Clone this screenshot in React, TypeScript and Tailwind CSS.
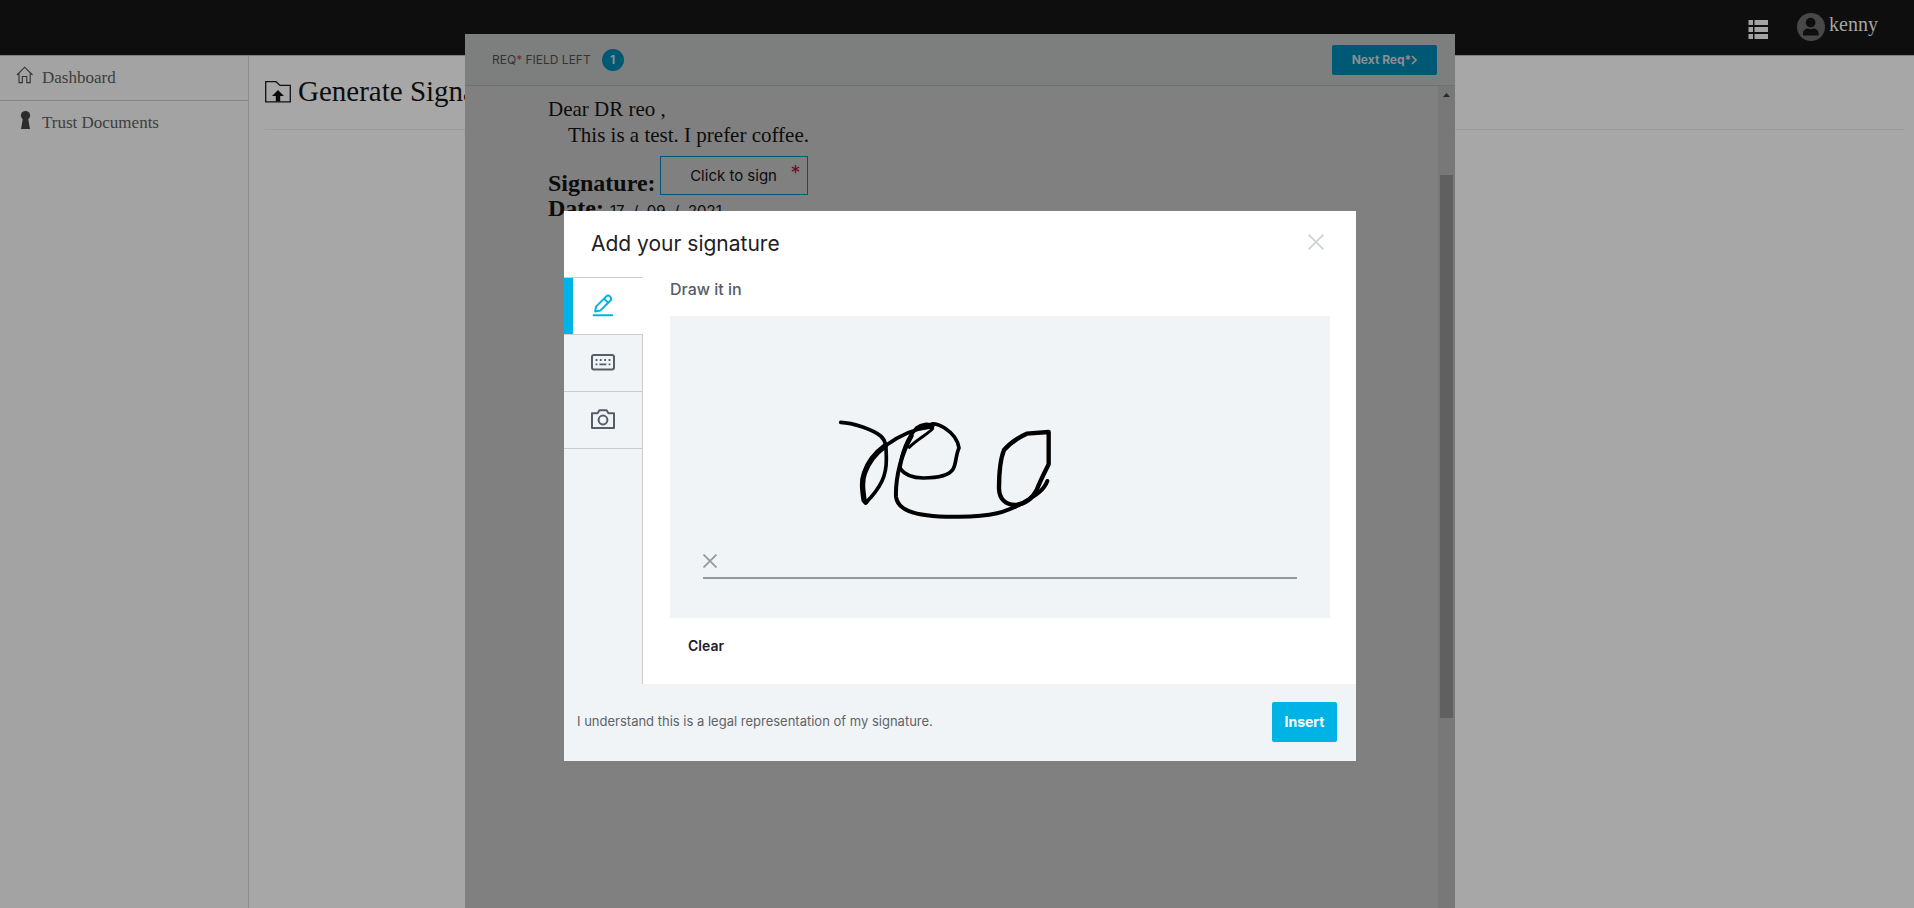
import React from "react";

const serif = "font-['Liberation_Serif',serif]";

function HomeIcon() {
  return (
    <svg width="18" height="18" viewBox="0 0 18 18" fill="none" stroke="#333" strokeWidth="1.1" aria-hidden="true">
      <path d="M1 9 L8.7 1.2 L16.5 9 M3 7.2 V16.6 H6.3 V10.5 H10.8 V16.6 H14.2 V7.2" />
    </svg>
  );
}

function KeyholeIcon() {
  return (
    <svg width="18" height="18" viewBox="0 0 18 18" fill="#2b2b2b" aria-hidden="true">
      <circle cx="9.5" cy="4.6" r="4.6" />
      <path d="M7 7 H12 L14 18 H5 Z" />
    </svg>
  );
}

function FolderUploadIcon() {
  return (
    <svg width="26" height="22" viewBox="0 0 26 22" aria-hidden="true">
      <path d="M.7 .7 H11 L15 4.4 H25.3 V20.8 H.7 Z" fill="none" stroke="#111" strokeWidth="1.3" />
      <path d="M13 9 L19 15 H15.2 V20.5 H10.8 V15 H7 Z" fill="#0a0a0a" />
    </svg>
  );
}

function ListIcon() {
  return (
    <svg width="20" height="20" viewBox="0 0 20 20" fill="#a3a3a3" aria-hidden="true">
      <path d="M.5 0H5V5H.5ZM6.5 0H20V5H6.5ZM.5 7H5V12H.5ZM6.5 7H20V12H6.5ZM.5 14H5V19H.5ZM6.5 14H20V19H6.5Z" />
    </svg>
  );
}

function AvatarIcon() {
  return (
    <svg width="28" height="28" viewBox="0 0 28 28" aria-hidden="true">
      <circle cx="14" cy="14" r="14" fill="#484848" />
      <circle cx="13.6" cy="9.6" r="4.9" fill="#0e0e0e" />
      <path d="M6 22.4 V20.5 C6 17 8.8 15.4 11 15.4 C12.8 16.4 14.6 16.4 16.4 15.4 C18.8 15.4 21.6 17 21.6 20.5 V22.4 Z" fill="#0e0e0e" />
    </svg>
  );
}

function PencilIcon() {
  return (
    <svg width="24" height="24" viewBox="0 0 24 24" fill="none" stroke="#00b3e6" strokeWidth="2" strokeLinejoin="round" strokeLinecap="round" aria-hidden="true">
      <path d="M3.2 17.4 L4 12.6 L14 2.6 A2.7 2.7 0 0 1 18.2 6.8 L8.2 16.6 Z M12.2 4.8 L16 8.6" />
      <path d="M1.6 21.2 H20.2" />
    </svg>
  );
}

function KeyboardIcon() {
  return (
    <svg width="24" height="24" viewBox="0 0 24 24" fill="none" stroke="#565d66" aria-hidden="true">
      <rect x="1" y="4" width="22" height="14.4" rx="2" strokeWidth="2" />
      <path d="M4.6 9H6.4M8.8 9H10.6M13.2 9H15M17.6 9H19.4M4.6 13.4H6.4M8.4 13.4H15.4M17.6 13.4H19.4" strokeWidth="1.9" />
    </svg>
  );
}

function CameraIcon() {
  return (
    <svg width="24" height="24" viewBox="0 0 24 24" fill="none" stroke="#565d66" strokeWidth="2" strokeLinejoin="round" aria-hidden="true">
      <path d="M1 5.2 H6.6 L8.4 2.2 H15.6 L17.4 5.2 H23 V20 H1 Z" />
      <circle cx="12" cy="12" r="4.4" />
    </svg>
  );
}

function Cross({ size, color, width }: { size: number; color: string; width: number }) {
  return (
    <svg width={size} height={size} viewBox="0 0 16 16" fill="none" stroke={color} strokeWidth={width} aria-hidden="true">
      <path d="M0.6 0.6 L15.4 15.4 M15.4 0.6 L0.6 15.4" />
    </svg>
  );
}

function Signature() {
  return (
    <svg width="250" height="140" viewBox="0 0 750 420" fill="none" stroke="#000" strokeLinecap="round" strokeLinejoin="round" role="img" aria-label="Drawn signature">
      <path strokeWidth="11" d="M62 67 C100 68 160 90 182 108 C198 122 199 138 199 180 C199 225 185 260 137 309" />
      <path strokeWidth="16" d="M137 306 L132 300 C128 270 124 245 133 220 C143 190 165 160 195 138" />
      <path strokeWidth="11" d="M195 138 C240 105 290 85 336 80" />
      <path strokeWidth="9" d="M338 86 C325 102 290 118 268 142" />
      <path strokeWidth="11" d="M338 78 C325 70 305 72 290 84 C262 112 243 165 240 205 C258 230 285 234 310 234 C350 234 385 230 399 208 C409 190 407 165 417 144 C413 118 395 98 375 85 C360 75 348 71 335 72" />
      <path strokeWidth="15" d="M308 80 C316 75 328 75 335 80" />
      <path strokeWidth="12" d="M275 108 C245 160 226 230 228 290 C232 325 270 350 400 350 C520 352 560 335 610 308 C650 285 672 270 682 243" />
      <path strokeWidth="13" d="M686 96 L620 101 C590 115 565 135 552 150 C542 175 537 210 537 265 C538 300 560 314 585 315 C620 312 640 290 650 270 C662 240 675 215 686 193 Z" />
    </svg>
  );
}

const tabs = [
  { label: "Draw", icon: <PencilIcon />, active: true },
  { label: "Type", icon: <KeyboardIcon />, active: false },
  { label: "Upload", icon: <CameraIcon />, active: false },
];

function SignatureDialog() {
  return (
    <section role="dialog" aria-modal="true" aria-labelledby="sig-title" className="w-[792px] bg-white text-[#1e2022]">
      <header className="flex h-[66px] items-center justify-between pr-8 pl-[27px]">
        <h2 id="sig-title" className="text-[21px] leading-7">Add your signature</h2>
        <button type="button" aria-label="Close" className="pb-1">
          <Cross size={16} color="#cfd2d6" width={1.8} />
        </button>
      </header>
      <div className="flex">
        <div role="tablist" aria-orientation="vertical" className="flex w-[79px] flex-col bg-[#f0f4f7]">
          {tabs.map((t) => (
            <button
              key={t.label}
              type="button"
              role="tab"
              aria-label={t.label}
              aria-selected={t.active}
              className={
                t.active
                  ? "flex h-[57px] items-center justify-center border-t border-t-[#ccc] bg-white shadow-[inset_9px_0_0_#00b3e6]"
                  : "flex h-[57px] items-center justify-center border-t border-r border-[#ccc]"
              }
            >
              {t.icon}
            </button>
          ))}
          <div className="flex-1 border-t border-r border-[#ccc]" />
        </div>
        <div className="flex flex-1 flex-col pr-[26px] pl-[27px]">
          <h3 className="h-[39px] text-[16px] leading-6 font-medium text-[#565d66]">Draw it in</h3>
          <div className="flex h-[302px] flex-col bg-[#f0f4f7] px-[33px] pt-[84px]">
            <div className="pl-[117px]">
              <Signature />
            </div>
            <div className="flex h-[39px] items-end border-b-2 border-[#9299a1] pb-[9px]">
              <Cross size={14} color="#9299a1" width={2} />
            </div>
          </div>
          <div className="flex h-[66px] items-start pt-4 pl-[18px]">
            <button type="button" className="text-[14px] leading-6 font-semibold">Clear</button>
          </div>
        </div>
      </div>
      <footer className="flex h-[77px] items-center justify-between bg-[#f0f4f7] pr-[19px] pb-0.5 pl-[13px]">
        <p className="text-[13px] text-[#5f6368]">I understand this is a legal representation of my signature.</p>
        <button type="button" className="h-10 w-[65px] rounded-xs bg-[#00b3e6] text-[14px] font-bold text-white">Insert</button>
      </footer>
    </section>
  );
}

function DocumentSheet() {
  return (
    <div className="flex w-[990px] flex-col bg-[#808080]">
      <header className="flex h-[52px] items-center justify-between border-b border-[#717171] bg-[#7c7f7e] pr-[18px] pl-[27px]">
        <div className="flex items-center gap-[11px] text-[12px] text-[#333]">
          <span>REQ<span className="text-[#7a1f38]">*</span> FIELD LEFT</span>
          <span className="flex size-[22px] items-center justify-center rounded-full bg-[#005974] text-[12px] font-bold text-[#8a9294]">1</span>
        </div>
        <button type="button" className="flex h-[30px] w-[105px] items-center justify-center rounded-xs bg-[#005974] text-[12px] font-bold text-[#8b8f90]">
          Next Req*
          <svg width="6" height="10" viewBox="0 0 6 10" fill="none" stroke="#8b8f90" strokeWidth="1.6" aria-hidden="true"><path d="M1 1L5 5L1 9" /></svg>
        </button>
      </header>
      <div className="flex flex-1">
        <div className={`flex-1 pt-[10px] pl-[83px] text-[21px] leading-[26px] text-[#0c0c0c] ${serif}`}>
          <p>Dear DR reo ,</p>
          <p className="pl-5">This is a test. I prefer coffee.</p>
          <div className="mt-2 flex items-end gap-1">
            <b className="text-[24px] leading-6">Signature:</b>
            <button type="button" className="relative flex h-[39px] w-[148px] items-center justify-center border border-[#005974] font-['Inter',sans-serif] text-[15px]">
              Click to sign
              <span className="absolute top-1 right-1.5 text-[20px] leading-6 text-[#6b1028]">*</span>
            </button>
          </div>
          <p className="flex items-baseline gap-[6px]">
            <b className="text-[24px]">Date:</b>
            <span className="font-['Inter',sans-serif] text-[15px]">17&nbsp; /&nbsp; 09&nbsp; /&nbsp; 2021</span>
          </p>
        </div>
        <div className="flex w-[17px] flex-col items-center bg-[#787878] pt-[7px]" aria-hidden="true">
          <svg width="7" height="4" viewBox="0 0 7 4" fill="#2a2a2a"><path d="M0 4L3.5 0L7 4Z" /></svg>
          <div className="mt-[78px] h-[543px] w-[13px] bg-[#606060]" />
        </div>
      </div>
    </div>
  );
}

export default function App() {
  return (
    <div className="relative flex min-h-screen flex-col overflow-hidden bg-[#a7a7a7] font-['Inter',sans-serif]">
      <header className={`flex h-14 items-start justify-end gap-[29px] border-b border-[#808080] bg-[#0e0e0e] pr-9 ${serif}`}>
        <button type="button" aria-label="Applications" className="mt-5">
          <ListIcon />
        </button>
        <a href="#account" className="mt-[13px] flex items-start gap-1 text-[20px] leading-[22px] text-[#a6a6a6]">
          <AvatarIcon />
          kenny
        </a>
      </header>
      <div className={`flex flex-1 ${serif}`}>
        <nav className="w-[249px] border-r border-[#8b8b8b] bg-[#a3a3a3] text-[17px] leading-6 text-[#3d3d3d]">
          <a href="#dashboard" className="flex h-[45px] items-start gap-2 border-b border-[#858585] pt-[10px] pl-4">
            <HomeIcon />
            Dashboard
          </a>
          <a href="#documents" className="flex h-[45px] items-start gap-2 pt-[10px] pl-4">
            <KeyholeIcon />
            Trust Documents
          </a>
        </nav>
        <main className="flex-1 pr-[10px] pl-4">
          <h1 className="flex h-[74px] items-center gap-[7px] border-b border-[#9c9c9c] pb-0.5 text-[29px] text-[#0d0d0d]">
            <FolderUploadIcon />
            Generate Signature
          </h1>
        </main>
      </div>
      <div className="absolute inset-0 flex justify-center pt-[34px] pl-1.5">
        <DocumentSheet />
      </div>
      <div className="absolute inset-0 flex items-start justify-center pt-[211px] pl-1.5">
        <SignatureDialog />
      </div>
    </div>
  );
}
